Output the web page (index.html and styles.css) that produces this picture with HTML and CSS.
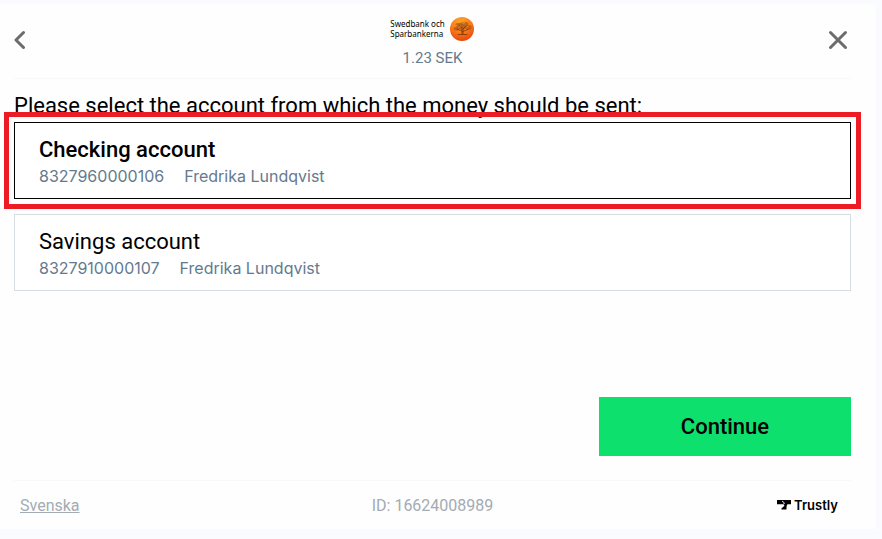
FILE: index.html
```
<!DOCTYPE html>
<html lang="en">
<head>
    <meta charset="UTF-8">
    <meta name="viewport" content="width=device-width, initial-scale=1">
    <title>Trustly - Select account</title>
    <link rel="stylesheet" href="styles.css">
</head>
<body>
    <form class="checkout">
        <!-- Header -->
        <header class="header">
            <button type="button" class="icon-btn" aria-label="Back">
                <svg width="12" height="20" viewBox="0 0 12 20" fill="none" stroke="#6c6c6c" stroke-width="3" stroke-linecap="round" stroke-linejoin="round">
                    <path d="M9.5 2.5L2 10l7.500 7.500"/>
                </svg>
            </button>
            <div class="bank">
                <div class="bank-logo">
                    <div class="bank-name">Swedbank och<br>Sparbankerna</div>
                    <svg width="26" height="26" viewBox="0 0 26 26">
                        <defs>
                            <radialGradient id="sun" cx="45%" cy="20%" r="80%">
                                <stop offset="0" stop-color="#ffa62b"/>
                                <stop offset="0.5" stop-color="#fb7f1a"/>
                                <stop offset="1" stop-color="#e8480c"/>
                            </radialGradient>
                        </defs>
                        <circle cx="13" cy="13" r="12" fill="url(#sun)"/>
                        <g fill="#a04a10" fill-opacity="0.6">
                            <ellipse cx="7.5" cy="12.5" rx="3" ry="2"/>
                            <ellipse cx="10" cy="9" rx="3.5" ry="2.2"/>
                            <ellipse cx="15.5" cy="8" rx="4" ry="2.2"/>
                            <ellipse cx="19.5" cy="11.5" rx="3" ry="2.4"/>
                            <ellipse cx="13.5" cy="11.5" rx="3.5" ry="2"/>
                        </g>
                        <g fill="none" stroke="#7e3507" stroke-width="0.8" stroke-linecap="round">
                            <path d="M13 18v-6M14 18v-5l3-3M13 15l-5-2M14 15.500l5-2M13 12l-3-3M9 18.500h9"/>
                        </g>
                        <path d="M5.500 11l2.500-2M10 11.500l2-2M13 7.500l3-1M17.500 11.500l2-1.500" stroke="#f9962c" stroke-width="0.8"/>
                    </svg>
                </div>
                <div class="amount">1.23 SEK</div>
            </div>
            <button type="button" class="icon-btn close-btn" aria-label="Close">
                <svg width="20" height="20" viewBox="0 0 20 20" fill="none" stroke="#6c6c6c" stroke-width="3" stroke-linecap="round">
                    <path d="M2.500 2.500l15 15M17.500 2.500l-15 15"/>
                </svg>
            </button>
        </header>

        <!-- Accounts -->
        <main class="content">
            <fieldset class="accounts">
                <legend class="title">Please select the account from which the money should be sent:</legend>
                <label class="account">
                    <input type="radio" name="account" value="checking" checked>
                    <span class="account-name">Checking account</span>
                    <span class="account-info"><span>8327960000106</span><span>Fredrika Lundqvist</span></span>
                </label>
                <label class="account">
                    <input type="radio" name="account" value="savings">
                    <span class="account-name">Savings account</span>
                    <span class="account-info"><span>8327910000107</span><span>Fredrika Lundqvist</span></span>
                </label>
            </fieldset>
            <button type="submit" class="continue-btn">Continue</button>
        </main>

        <!-- Footer -->
        <footer class="footer">
            <a class="language" href="#">Svenska</a>
            <div class="order-id">ID: 16624008989</div>
            <div class="trustly">
                <svg width="14" height="10" viewBox="0 0 14 10">
                    <path d="M0 0h14v4.300h-3.500C9.500 5.500 9.500 6.500 9.500 9.500h-5V8.200c1.500-.7 2.500-2 3-3.200L5 4.300H0z" fill="#000"/>
                    <path d="M5 1l2.500 2L5.500 5" fill="none" stroke="#fff" stroke-width="0.9"/>
                </svg>
                <span>Trustly</span>
            </div>
        </footer>
    </form>
</body>
</html>
```

FILE: styles.css
```
* {
    box-sizing: border-box;
}
body {
    margin: 0;
    min-height: 100vh;
    padding: 4px 6px 10px 0;
    display: flex;
    background: #f9fbfe;
    color: #000;
    font-family: Roboto, "Liberation Sans", sans-serif;
}
button {
    font-family: inherit;
    border: none;
    padding: 0;
    cursor: pointer;
}
svg {
    display: block;
}
.checkout {
    flex: 1;
    display: flex;
    flex-direction: column;
    padding: 0 25px 0 14px;
    background: #fefefe;
}

/* header */
.header {
    display: grid;
    grid-template-columns: 1fr auto 1fr;
    align-items: center;
    height: 75px;
    padding-bottom: 2px;
    border-bottom: 1px solid #f8f8f9;
}
.icon-btn {
    justify-self: start;
    background: none;
}
.close-btn {
    justify-self: end;
    margin-right: 3px;
}
.bank {
    display: flex;
    flex-direction: column;
    align-items: center;
    gap: 6px;
    padding-top: 4px;
}
.bank-logo {
    display: flex;
    align-items: center;
    gap: 4px;
}
.bank-name {
    font-family: "Noto Sans", sans-serif;
    font-size: 8px;
    line-height: 10px;
}
.amount {
    font-size: 15px;
    line-height: 20px;
    color: #647a8e;
}

/* account list */
.content {
    flex: 1;
    display: flex;
    flex-direction: column;
    justify-content: space-between;
    gap: 24px;
    padding: 14px 0 24px;
}
.accounts {
    display: flex;
    flex-direction: column;
    gap: 15px;
    margin: 0;
    padding: 0;
    border: none;
}
.title {
    padding: 0 0 3px;
    font-size: 22px;
    line-height: 26px;
}
.account {
    display: flex;
    flex-direction: column;
    padding: 13px 24px 10px;
    border: 1px solid #d6dde4;
    background: #fff;
    cursor: pointer;
}
.account input {
    appearance: none;
    position: absolute;
    margin: 0;
}
.account:has(input:checked) {
    border-color: #000;
    outline: 5px solid #ed1c24;
    outline-offset: 5px;
}
.account:has(input:checked) .account-name {
    font-weight: 500;
}
.account-name {
    font-size: 22px;
    line-height: 28px;
}
.account-info {
    display: flex;
    gap: 20px;
    font-family: Inter, "Liberation Sans", sans-serif;
    font-size: 16px;
    line-height: 24px;
    color: #647a8e;
}
.continue-btn {
    align-self: flex-end;
    width: 252px;
    height: 59px;
    background: #0ee06e;
    color: #000;
    font-size: 22px;
    font-weight: 500;
}

/* footer */
.footer {
    display: grid;
    grid-template-columns: 1fr auto 1fr;
    align-items: center;
    height: 49px;
    border-top: 1px solid #f8f8f9;
    font-size: 16px;
    color: #a3abb3;
}
.language {
    justify-self: start;
    margin-left: 6px;
    color: inherit;
}
.trustly {
    justify-self: end;
    display: flex;
    align-items: center;
    gap: 3px;
    margin-right: 13px;
    color: #000;
    font-family: Inter, "Liberation Sans", sans-serif;
    font-size: 13px;
    font-weight: 600;
}
```
